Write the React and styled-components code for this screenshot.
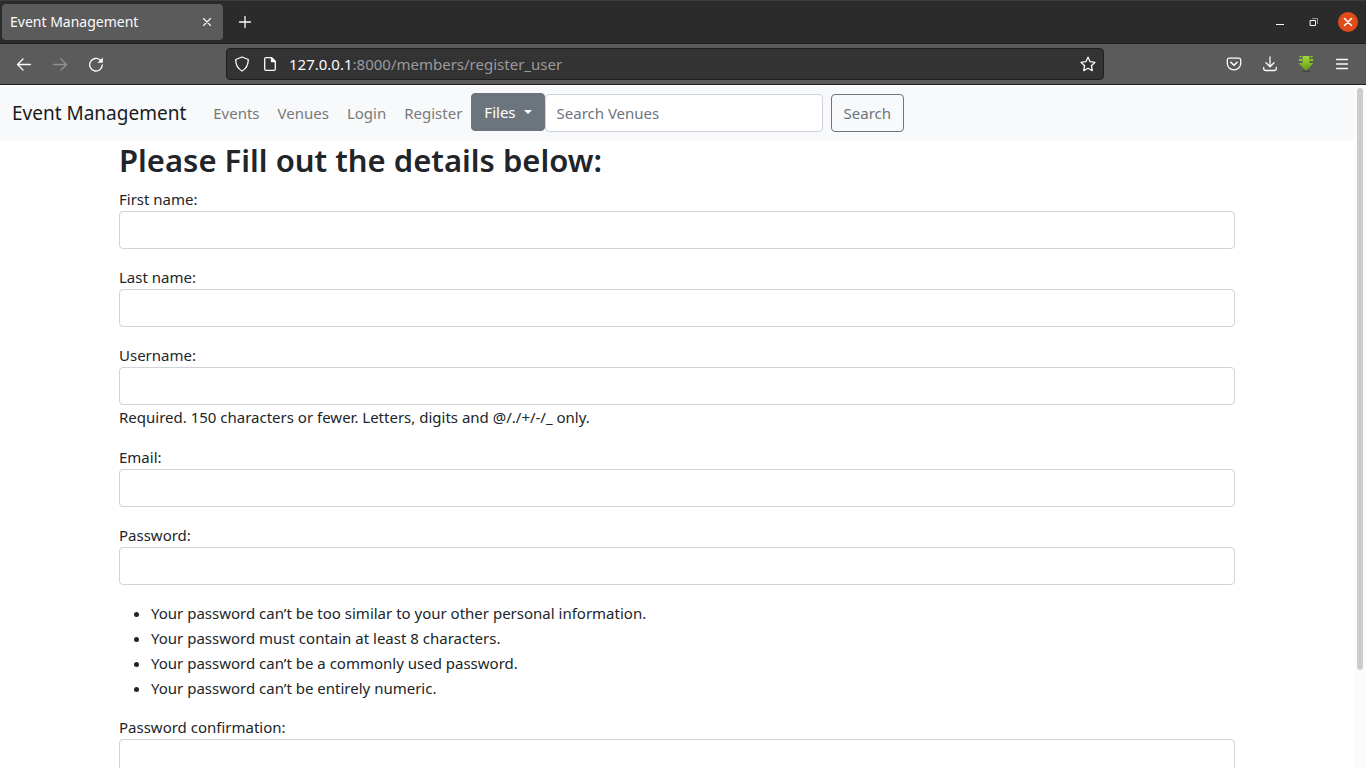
import React from "react";
import styled, { createGlobalStyle } from "styled-components";

const GlobalStyle = createGlobalStyle`
  *, *::before, *::after { box-sizing: border-box; }
  body {
    margin: 0;
    font-family: "Noto Sans", "Open Sans", sans-serif;
    font-size: 15px;
    line-height: 24px;
    color: #212529;
    background: #fff;
  }
  button, input { font: inherit; margin: 0; }
  svg { display: block; }
`;

const Window = styled.div`
  display: flex;
  flex-direction: column;
  height: 100vh;
`;

const TabStrip = styled.div`
  display: flex;
  align-items: center;
  justify-content: space-between;
  height: 44px;
  flex: none;
  padding: 0 8px 0 2px;
  background: #2b2b2b;
  border-top: 1px solid #3c3c3c;
  border-bottom: 1px solid #1f1f1f;
`;

const TabGroup = styled.div`
  display: flex;
  align-items: center;
  gap: 10px;
`;

const Tab = styled.div`
  display: flex;
  align-items: center;
  justify-content: space-between;
  width: 221px;
  height: 36px;
  padding: 0 5px 0 8px;
  border-radius: 4px;
  background: #5b5b5b;
  color: #fbfbfe;
  font-size: 14px;
`;

const IconButton = styled.button`
  display: grid;
  place-items: center;
  flex: none;
  width: ${(p) => p.$size || 24}px;
  height: ${(p) => p.$size || 24}px;
  padding: 0;
  border: 0;
  border-radius: 4px;
  background: none;
  color: ${(p) => (p.disabled ? "#919191" : "#fbfbfe")};
`;

const WindowControls = styled.div`
  display: flex;
  align-items: center;
  gap: 14px;
`;

const CloseButton = styled(IconButton)`
  width: 20px;
  height: 20px;
  border-radius: 50%;
  background: #e04c18;
`;

const Toolbar = styled.div`
  display: flex;
  align-items: center;
  justify-content: space-between;
  height: 41px;
  flex: none;
  padding: 0 12px;
  background: #5b5b5b;
  border-bottom: 1px solid #202020;
`;

const ToolGroup = styled.div`
  display: flex;
  gap: 12px;
`;

const AddressBar = styled.div`
  display: flex;
  align-items: center;
  width: 878px;
  height: 32px;
  padding: 0 3px;
  gap: 4px;
  border: 1px solid #1f1f1f;
  border-radius: 4px;
  background: #333;
  color: #9a9a9e;
`;

const Address = styled.div`
  flex: 1;
  padding-left: 3px;
`;

const Host = styled.span`
  color: #fbfbfe;
`;

const Viewport = styled.div`
  display: flex;
  flex: 1;
  min-height: 0;
`;

const Page = styled.div`
  flex: 1;
  overflow-y: auto;
  scrollbar-width: none;
`;

const ScrollTrack = styled.div`
  flex: none;
  width: 12px;
  padding: 3px;
  background: #fcfcfc;
`;

const ScrollThumb = styled.div`
  width: 6px;
  height: 86%;
  border-radius: 3px;
  background: #cdcdcd;
`;

const Navbar = styled.nav`
  display: flex;
  align-items: center;
  height: 56px;
  padding: 0 12px;
  background: #f8f9fa;
`;

const Brand = styled.a`
  margin-right: 18px;
  color: #1a1b1c;
  font-size: 19px;
  text-decoration: none;
`;

const NavLink = styled.a`
  padding: 0 9px;
  color: #77797a;
  text-decoration: none;
`;

const Button = styled.button`
  height: 38px;
  padding: 0 12px;
  border: 1px solid #6c757d;
  border-radius: 4px;
  background: ${(p) => (p.$filled ? "#6c757d" : "transparent")};
  color: ${(p) => (p.$filled ? "#fff" : "#6c757d")};
`;

const FilesButton = styled(Button)`
  display: flex;
  align-items: center;
  gap: 8px;
  margin-bottom: 2px;
`;

const Caret = styled.span`
  border: 4px solid transparent;
  border-top-color: currentColor;
  border-bottom: 0;
`;

const SearchForm = styled.form`
  display: flex;
  gap: 8px;
`;

const TextInput = styled.input`
  display: block;
  width: 100%;
  height: 38px;
  padding: 0 11px;
  border: 1px solid #ced4da;
  border-radius: 4px;
  background: #fff;
  color: #212529;
  &::placeholder { color: #6c757d; opacity: 1; }
`;

const SearchInput = styled(TextInput)`
  width: 278px;
`;

const Container = styled.main`
  max-width: 1140px;
  margin: 0 auto;
  padding: 0 12px 24px;
`;

const Title = styled.h1`
  margin: 0 0 8px;
  font-size: 31px;
  font-weight: 600;
  line-height: 38px;
`;

const Field = styled.div`
  margin-bottom: 16px;
`;

const Label = styled.label`
  display: block;
`;

const Rules = styled.ul`
  margin: 0 0 14px;
  padding-left: 32px;
  line-height: 25px;
`;

const Icon = ({ children, size = 16 }) => (
  <svg width={size} height={size} viewBox="0 0 16 16" fill="none" stroke="currentColor"
    strokeWidth="1.3" strokeLinecap="round" strokeLinejoin="round" aria-hidden="true">
    {children}
  </svg>
);

const FormField = ({ id, label, type = "text", help }) => (
  <Field>
    <Label htmlFor={id}>{label}</Label>
    <TextInput id={id} type={type} />
    {help && <div>{help}</div>}
  </Field>
);

const rules = [
  "Your password can’t be too similar to your other personal information.",
  "Your password must contain at least 8 characters.",
  "Your password can’t be a commonly used password.",
  "Your password can’t be entirely numeric.",
];

export default function App() {
  return (
    <Window>
      <GlobalStyle />
      <TabStrip>
        <TabGroup>
          <Tab>
            Event Management
            <IconButton aria-label="Close tab" $size={22}>
              <Icon><path d="M4.500 4.500l7 7M11.500 4.500l-7 7" strokeWidth="1.1" /></Icon>
            </IconButton>
          </Tab>
          <IconButton aria-label="New tab">
            <Icon><path d="M8 2.500v11M2.500 8h11" /></Icon>
          </IconButton>
        </TabGroup>
        <WindowControls>
          <IconButton aria-label="Minimize" $size={20}>
            <Icon><path d="M4 10.500h8" strokeWidth="1" strokeLinecap="butt" /></Icon>
          </IconButton>
          <IconButton aria-label="Restore" $size={20}>
            <Icon>
              <path d="M4.500 6.500h5v5h-5z" strokeWidth="1" strokeLinejoin="miter" />
              <path d="M6 4.500h5.500V10" strokeWidth="1" strokeLinejoin="miter" strokeLinecap="butt" opacity="0.5" />
            </Icon>
          </IconButton>
          <CloseButton aria-label="Close window">
            <Icon><path d="M4.500 4.500l7 7M11.500 4.500l-7 7" strokeWidth="1.6" /></Icon>
          </CloseButton>
        </WindowControls>
      </TabStrip>

      <Toolbar>
        <ToolGroup>
          <IconButton aria-label="Back">
            <Icon><path d="M14.500 8.500h-13M7 3L1.500 8.500 7 14" /></Icon>
          </IconButton>
          <IconButton aria-label="Forward" disabled>
            <Icon><path d="M1.500 8.500h13M9 3l5.500 5.500L9 14" /></Icon>
          </IconButton>
          <IconButton aria-label="Reload">
            <Icon>
              <path d="M14.300 8.800A6.300 6.300 0 1 1 12.200 4" />
              <path d="M14.800 1.500v5.300H9.500z" fill="currentColor" stroke="none" />
            </Icon>
          </IconButton>
        </ToolGroup>
        <AddressBar>
          <IconButton aria-label="Tracking protection">
            <Icon><path d="M8 1L14.300 3.500C14.300 9 12.500 12.500 8 15 3.500 12.500 1.700 9 1.700 3.500Z" /></Icon>
          </IconButton>
          <IconButton aria-label="Site information">
            <Icon>
              <path d="M9.500 1.700H4A1.300 1.300 0 0 0 2.700 3v10A1.300 1.300 0 0 0 4 14.300h8a1.300 1.300 0 0 0 1.300-1.300V5.500Z" />
              <path d="M9.500 1.700v3.800h3.800Z" fill="currentColor" />
            </Icon>
          </IconButton>
          <Address><Host>127.0.0.1</Host>:8000/members/register_user</Address>
          <IconButton aria-label="Bookmark this page">
            <Icon><path d="M8 1.200l2.100 4.500 4.900.6-3.600 3.400.9 4.900L8 12.200l-4.300 2.400.9-4.900L1 6.300l4.900-.6Z" /></Icon>
          </IconButton>
        </AddressBar>
        <ToolGroup>
          <IconButton aria-label="Save to Pocket">
            <Icon>
              <path d="M3 2.200h10A1.800 1.800 0 0 1 14.700 4v3.500a6.700 6.300 0 0 1-13.400 0V4A1.800 1.800 0 0 1 3 2.200Z" />
              <path d="M4.800 6.200L8 9.300l3.200-3.100" strokeWidth="1.500" />
            </Icon>
          </IconButton>
          <IconButton aria-label="Downloads">
            <Icon><path d="M8 1v9.500M4 6.800L8 10.700l4-3.900M1.700 11.500v1.300a1.700 1.700 0 0 0 1.700 1.700h9.200a1.700 1.700 0 0 0 1.700-1.700v-1.300" /></Icon>
          </IconButton>
          <IconButton aria-label="Download helper">
            <svg width="16" height="16" viewBox="0 0 16 16" aria-hidden="true">
              <defs>
                <linearGradient id="leaf" x1="0" y1="0" x2="0" y2="1">
                  <stop offset="0" stopColor="#a4d63a" />
                  <stop offset="1" stopColor="#5f9f10" />
                </linearGradient>
              </defs>
              <ellipse cx="8" cy="15" rx="4" ry="1" fill="#444" />
              <path d="M4.500 0h7v7H15.500L8 15 .5 7h4Z" fill="url(#leaf)" />
              <path d="M1.500 0h2v1.500h-2zM1 3h3v2H1zM12.500 0h2v1.500h-2zM12 3h3v2h-3z" fill="#8cc928" />
            </svg>
          </IconButton>
          <IconButton aria-label="Open menu">
            <Icon><path d="M2.500 3.500h11M2.500 8h11M2.500 12.500h11" /></Icon>
          </IconButton>
        </ToolGroup>
      </Toolbar>

      <Viewport>
        <Page>
          <Navbar>
            <Brand href="#">Event Management</Brand>
            <NavLink href="#">Events</NavLink>
            <NavLink href="#">Venues</NavLink>
            <NavLink href="#">Login</NavLink>
            <NavLink href="#">Register</NavLink>
            <FilesButton type="button" $filled>Files<Caret /></FilesButton>
            <SearchForm onSubmit={(e) => e.preventDefault()}>
              <SearchInput type="search" placeholder="Search Venues" aria-label="Search Venues" />
              <Button type="submit">Search</Button>
            </SearchForm>
          </Navbar>
          <Container>
            <Title>Please Fill out the details below:</Title>
            <form onSubmit={(e) => e.preventDefault()}>
              <FormField id="first_name" label="First name:" />
              <FormField id="last_name" label="Last name:" />
              <FormField id="username" label="Username:"
                help="Required. 150 characters or fewer. Letters, digits and @/./+/-/_ only." />
              <FormField id="email" label="Email:" type="email" />
              <FormField id="password1" label="Password:" type="password" />
              <Rules>
                {rules.map((rule) => <li key={rule}>{rule}</li>)}
              </Rules>
              <FormField id="password2" label="Password confirmation:" type="password" />
            </form>
          </Container>
        </Page>
        <ScrollTrack><ScrollThumb /></ScrollTrack>
      </Viewport>
    </Window>
  );
}
